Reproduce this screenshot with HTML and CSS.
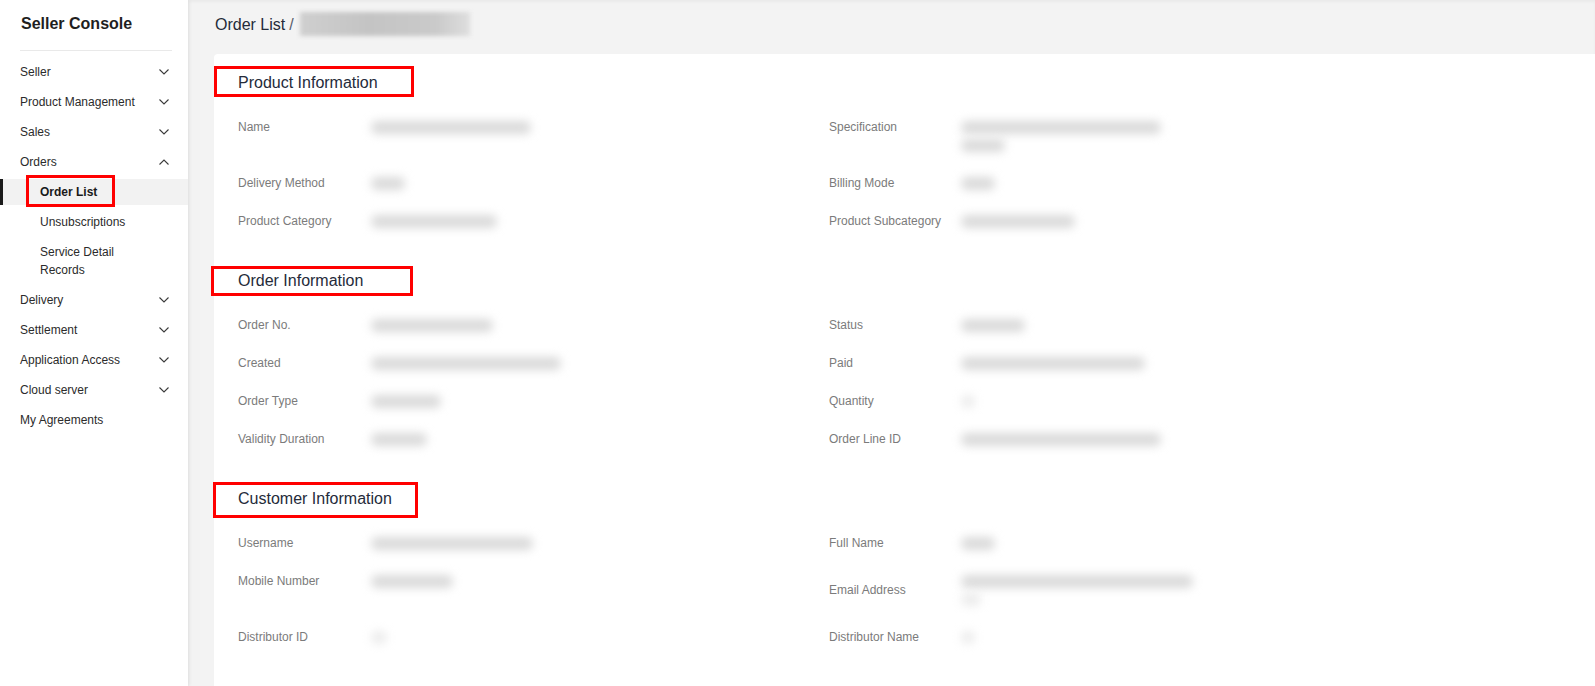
FILE: index.html
```html
<!DOCTYPE html>
<html lang="en">
  <head>
    <meta charset="UTF-8" />
    <meta name="viewport" content="width=device-width, initial-scale=1.0" />
    <title>Seller Console - Order Details</title>
    <link rel="stylesheet" href="styles.css">
  </head>
  <body>
    <aside class="sidebar">
      <div class="brand">Seller Console</div>
      <ul class="nav">
        <li class="nav-item">Seller<svg class="chev" viewBox="0 0 10 6"><polyline points="0.5,0.5 5,5 9.5,0.5" /></svg></li>
        <li class="nav-item">Product Management<svg class="chev" viewBox="0 0 10 6"><polyline points="0.5,0.5 5,5 9.5,0.5" /></svg></li>
        <li class="nav-item">Sales<svg class="chev" viewBox="0 0 10 6"><polyline points="0.5,0.5 5,5 9.5,0.5" /></svg></li>
        <li class="nav-item">Orders<svg class="chev" viewBox="0 0 10 6"><polyline points="0.5,5.5 5,1 9.5,5.5" /></svg></li>
        <li class="nav-sub active"><span class="mark mark-nav">Order List</span></li>
        <li class="nav-sub">Unsubscriptions</li>
        <li class="nav-sub">Service Detail Records</li>
        <li class="nav-item">Delivery<svg class="chev" viewBox="0 0 10 6"><polyline points="0.5,0.5 5,5 9.5,0.5" /></svg></li>
        <li class="nav-item">Settlement<svg class="chev" viewBox="0 0 10 6"><polyline points="0.5,0.5 5,5 9.5,0.5" /></svg></li>
        <li class="nav-item">Application Access<svg class="chev" viewBox="0 0 10 6"><polyline points="0.5,0.5 5,5 9.5,0.5" /></svg></li>
        <li class="nav-item">Cloud server<svg class="chev" viewBox="0 0 10 6"><polyline points="0.5,0.5 5,5 9.5,0.5" /></svg></li>
        <li class="nav-item">My Agreements</li>
      </ul>
    </aside>

    <main class="main">
      <div class="crumb">
        Order List <span class="crumb-sep">/</span><span class="crumb-blur"></span>
      </div>

      <div class="card">
        <!-- product -->
        <section class="info">
          <h2 class="info-title"><span class="mark mark-title">Product Information</span></h2>
          <div class="info-grid">
            <div class="label">Name</div>
            <div class="value"><div class="line"><i class="blur" style="width:160px"></i></div></div>
            <div class="label">Specification</div>
            <div class="value">
              <div class="line"><i class="blur" style="width:200px"></i></div>
              <div class="line"><i class="blur" style="width:44px"></i></div>
            </div>

            <div class="label">Delivery Method</div>
            <div class="value"><div class="line"><i class="blur" style="width:34px"></i></div></div>
            <div class="label">Billing Mode</div>
            <div class="value"><div class="line"><i class="blur" style="width:34px"></i></div></div>

            <div class="label">Product Category</div>
            <div class="value"><div class="line"><i class="blur" style="width:126px"></i></div></div>
            <div class="label">Product Subcategory</div>
            <div class="value"><div class="line"><i class="blur" style="width:114px"></i></div></div>
          </div>
        </section>

        <!-- order -->
        <section class="info">
          <h2 class="info-title"><span class="mark mark-title mark-order">Order Information</span></h2>
          <div class="info-grid">
            <div class="label">Order No.</div>
            <div class="value"><div class="line"><i class="blur" style="width:122px"></i></div></div>
            <div class="label">Status</div>
            <div class="value"><div class="line"><i class="blur" style="width:64px"></i></div></div>

            <div class="label">Created</div>
            <div class="value"><div class="line"><i class="blur" style="width:190px"></i></div></div>
            <div class="label">Paid</div>
            <div class="value"><div class="line"><i class="blur" style="width:184px"></i></div></div>

            <div class="label">Order Type</div>
            <div class="value"><div class="line"><i class="blur" style="width:70px"></i></div></div>
            <div class="label">Quantity</div>
            <div class="value"><div class="line"><i class="blur faint" style="width:14px"></i></div></div>

            <div class="label">Validity Duration</div>
            <div class="value"><div class="line"><i class="blur" style="width:56px"></i></div></div>
            <div class="label">Order Line ID</div>
            <div class="value"><div class="line"><i class="blur" style="width:200px"></i></div></div>
          </div>
        </section>

        <!-- customer -->
        <section class="info">
          <h2 class="info-title"><span class="mark mark-title mark-customer">Customer Information</span></h2>
          <div class="info-grid">
            <div class="label">Username</div>
            <div class="value"><div class="line"><i class="blur" style="width:162px"></i></div></div>
            <div class="label">Full Name</div>
            <div class="value"><div class="line"><i class="blur" style="width:34px"></i></div></div>

            <div class="label">Mobile Number</div>
            <div class="value"><div class="line"><i class="blur" style="width:82px"></i></div></div>
            <div class="label label-mid">Email Address</div>
            <div class="value">
              <div class="line"><i class="blur" style="width:232px"></i></div>
              <div class="line"><i class="blur faint" style="width:20px"></i></div>
            </div>

            <div class="label">Distributor ID</div>
            <div class="value"><div class="line"><i class="blur faint" style="width:16px"></i></div></div>
            <div class="label">Distributor Name</div>
            <div class="value"><div class="line"><i class="blur faint" style="width:14px"></i></div></div>
          </div>
        </section>
      </div>
    </main>
  </body>
</html>
```

FILE: styles.css
```css
body {
  margin: 0;
  height: 100vh;
  overflow: hidden;
  display: flex;
  font-family: "Liberation Sans", Arial, sans-serif;
  color: #252b3a;
  background-color: #f3f3f3;
}

/* sidebar */
.sidebar {
  position: relative;
  z-index: 1;
  width: 188px;
  flex-shrink: 0;
  background-color: #fff;
  box-shadow: 1px 0 4px rgba(0, 0, 0, 0.08);
}
.brand {
  margin: 0 16px 0 20px;
  padding: 14px 0 16px 1px;
  line-height: 20px;
  font-size: 16px;
  font-weight: bold;
  color: #1f1f1f;
  border-bottom: 1px solid #e9e9e9;
}
.nav {
  list-style: none;
  margin: 0;
  padding: 4px 0 0 0;
  font-size: 12px;
  line-height: 18px;
  color: #2b2b2b;
}
/* margins collapse between items: 26px box + 4px = 30px pitch */
.nav-item,
.nav-sub {
  margin: 4px 0;
  padding: 4px 19px 4px 20px;
  cursor: pointer;
}
.nav-item {
  display: flex;
  justify-content: space-between;
  align-items: center;
}
.nav-sub {
  padding-left: 40px;
  padding-right: 60px;
}
.nav-sub.active {
  font-weight: bold;
  background-color: #f2f2f2;
  box-shadow: inset 3px 0 0 #1a1a1a;
  color: #1a1a1a;
}
.chev {
  width: 10px;
  height: 6px;
  fill: none;
  stroke: #3a3a3a;
  stroke-width: 1.1;
}

/* red annotation boxes */
.mark {
  position: relative;
  display: inline-block;
}
.mark::after {
  content: "";
  position: absolute;
  box-sizing: border-box;
  border: 3px solid #ff0000;
}
.mark-nav::after {
  left: -14px;
  top: -8px;
  width: 89px;
  height: 32px;
}
.mark-title::after {
  left: -24px;
  top: -5px;
  width: 200px;
  height: 31px;
}
.mark-order::after {
  left: -27px;
  top: -3px;
  width: 202px;
  height: 30px;
}
.mark-customer::after {
  left: -25px;
  top: -5px;
  width: 205px;
  height: 36px;
}

/* main */
.main {
  flex: 1;
  display: flex;
  flex-direction: column;
  padding-left: 26px;
  box-shadow: inset 0 2px 3px rgba(0, 0, 0, 0.04);
}
.crumb {
  height: 54px;
  box-sizing: border-box;
  padding: 15px 0 0 1px;
  display: flex;
  align-items: flex-start;
  line-height: 20px;
  font-size: 16px;
}
.crumb-sep {
  margin-left: 4px;
  color: #575d6c;
}
.crumb-blur {
  width: 170px;
  height: 24px;
  margin: -3px 0 0 6px;
  background: linear-gradient(90deg, #cfcfcf, #c4c4c4 40%, #cacaca 80%, #dedede);
  filter: blur(2px);
}
.card {
  flex: 1;
  background-color: #fff;
  border-radius: 4px 0 0 0;
  padding: 17px 0 0 24px;
}

.info + .info {
  margin-top: 39px;
}
.info-title {
  margin: 0 0 23px 0;
  font-size: 16px;
  font-weight: normal;
  line-height: 24px;
}
.info-grid {
  display: grid;
  grid-template-columns: 125px 466px 124px 1fr;
  row-gap: 20px;
  font-size: 12px;
  line-height: 18px;
}
.label {
  color: #7b7b7b;
}
.label-mid {
  align-self: center;
}
.line {
  height: 18px;
  display: flex;
  align-items: center;
  padding-left: 8px;
}
.blur {
  display: block;
  height: 13px;
  border-radius: 6px;
  background-color: #dadada;
  filter: blur(5px);
}
.blur.faint {
  background-color: #ececec;
}
```
